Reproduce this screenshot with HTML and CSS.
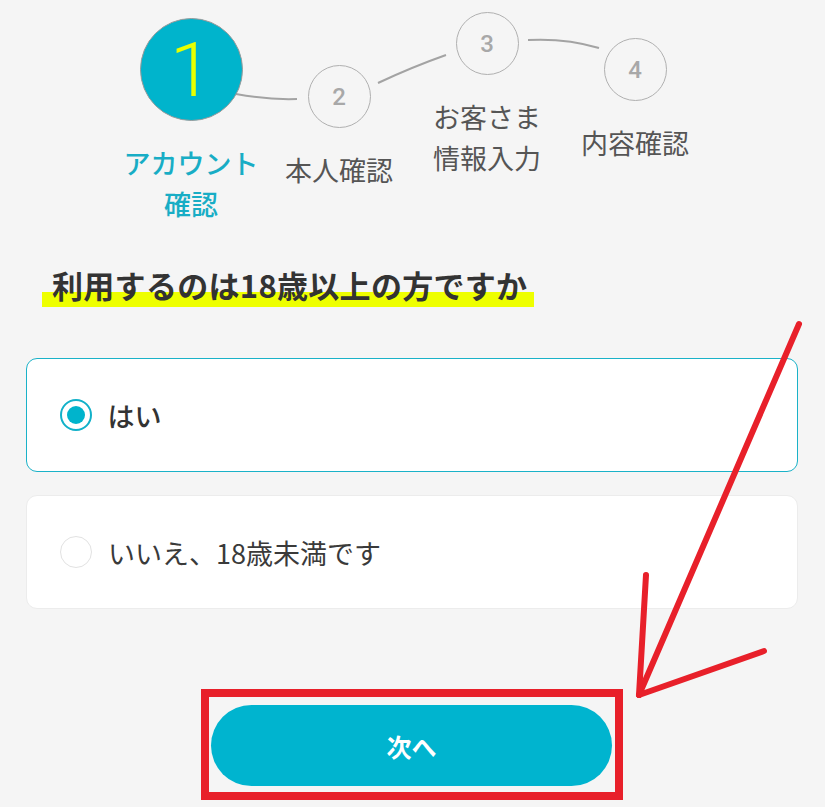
FILE: index.html
```html
<!DOCTYPE html>
<html lang="ja">
<head>
<meta charset="utf-8">
<title>年齢確認</title>
<link rel="stylesheet" href="styles.css">
</head>
<body>
<div class="page">
  <div class="steps">
    <svg class="connectors" viewBox="0 0 825 263" width="825" height="263">
      <path d="M236 94 Q268 100 297 99" />
      <path d="M378 83 Q412 67 446 55" />
      <path d="M528 40 Q566 38 599 48" />
    </svg>
    <div class="step step-1">
      <div class="circle circle-active"><span class="num-big">1</span></div>
      <div class="label label-active">アカウント<br>確認</div>
    </div>
    <div class="step step-2">
      <div class="circle">2</div>
      <div class="label">本人確認</div>
    </div>
    <div class="step step-3">
      <div class="circle">3</div>
      <div class="label">お客さま<br>情報入力</div>
    </div>
    <div class="step step-4">
      <div class="circle">4</div>
      <div class="label">内容確認</div>
    </div>
  </div>

  <h1 class="question"><span class="marker">利用するのは18歳以上の方ですか</span></h1>

  <div class="options">
    <label class="option option-selected">
      <span class="radio radio-on"></span>
      <span class="option-text">はい</span>
    </label>
    <label class="option">
      <span class="radio"></span>
      <span class="option-text">いいえ、18歳未満です</span>
    </label>
  </div>

  <div class="actions">
    <button class="next-btn">次へ</button>
  </div>

  <div class="red-box"></div>
  <svg class="arrow" viewBox="0 0 825 807" width="825" height="807">
    <line x1="799" y1="324" x2="639" y2="695" />
    <line x1="646" y1="575" x2="639" y2="695" />
    <line x1="764" y1="651" x2="639" y2="695" />
  </svg>
</div>
</body>
</html>
```

FILE: styles.css
```css
* {
  box-sizing: border-box;
}

html, body {
  margin: 0;
  padding: 0;
  background: #f5f5f5;
}

body {
  font-family: "Noto Sans CJK JP", "Noto Sans", sans-serif;
  color: #333;
}

.page {
  position: relative;
  width: 825px;
  height: 807px;
  overflow: hidden;
}

/* ---------- steps ---------- */
.steps {
  position: relative;
  height: 263px;
  display: flex;
  justify-content: center;
  align-items: flex-start;
  padding-left: 1px;
}

.connectors {
  position: absolute;
  left: 0;
  top: 0;
}

.connectors path {
  fill: none;
  stroke: #a3a3a3;
  stroke-width: 2;
}

.step {
  width: 148px;
  display: flex;
  flex-direction: column;
  align-items: center;
  position: relative;
}

.step-1 { margin-top: 18px; }
.step-2 { margin-top: 65px; }
.step-3 { margin-top: 12px; }
.step-4 { margin-top: 38px; }

.circle {
  width: 63px;
  height: 63px;
  border-radius: 50%;
  border: 1.5px solid #b0b0b0;
  display: flex;
  align-items: center;
  justify-content: center;
  font-family: Roboto, "Liberation Sans", sans-serif;
  font-weight: 500;
  font-size: 24px;
  color: #a8a8a8;
}

.circle-active {
  width: 103px;
  height: 103px;
  background: #00b4cc;
  border: 1px solid #9a9a9a;
}

.num-big {
  font-family: Roboto, "Liberation Sans", sans-serif;
  font-weight: 300;
  font-size: 76px;
  line-height: 1;
  color: #e8ff00;
}

.label {
  margin-top: 21px;
  font-size: 27px;
  line-height: 41px;
  text-align: center;
  color: #555;
  white-space: nowrap;
}

.label-active {
  color: #18adc5;
  font-weight: 500;
}

/* ---------- question ---------- */
.question {
  margin: 0;
  padding-left: 42px;
  font-size: 31px;
  font-weight: 700;
  line-height: 44px;
  color: #333;
}

.marker {
  display: inline-block;
  padding: 0 7px 0 10px;
  letter-spacing: 0.3px;
  background: linear-gradient(to bottom, transparent 66%, #eeff00 66%, #eeff00 100%);
}

/* ---------- options ---------- */
.options {
  margin-top: 51px;
  padding: 0 27px 0 26px;
  display: flex;
  flex-direction: column;
  gap: 23px;
}

.option {
  display: flex;
  align-items: center;
  height: 114px;
  padding-left: 33px;
  background: #fff;
  border: 1px solid #ececec;
  border-radius: 11px;
}

.option-selected {
  border: 1.5px solid #1ab2c8;
  padding-left: 32.5px;
}

.radio {
  width: 32px;
  height: 32px;
  border-radius: 50%;
  border: 1.5px solid #e2e2e2;
  background: #fff;
  display: flex;
  align-items: center;
  justify-content: center;
  flex-shrink: 0;
}

.radio-on {
  border: 2px solid #12b1c9;
}

.radio-on::after {
  content: "";
  width: 18px;
  height: 18px;
  border-radius: 50%;
  background: #00b4cc;
}

.option-text {
  margin-left: 16px;
  font-size: 27px;
  font-weight: 400;
  color: #3a3a3a;
}

.option-selected .option-text {
  font-weight: 500;
  color: #333;
}

/* ---------- action ---------- */
.actions {
  margin-top: 96px;
  display: flex;
  justify-content: center;
  padding-right: 2px;
}

.next-btn {
  width: 401px;
  height: 81px;
  border: none;
  border-radius: 41px;
  background: #00b4cf;
  color: #fff;
  font-family: "Noto Sans CJK JP", sans-serif;
  font-size: 25px;
  font-weight: 700;
}

/* ---------- annotations ---------- */
.red-box {
  position: absolute;
  left: 201px;
  top: 689px;
  width: 422px;
  height: 111px;
  border: 8px solid #e8202a;
}

.arrow {
  position: absolute;
  left: 0;
  top: 0;
  pointer-events: none;
}

.arrow line {
  stroke: #e8202a;
  stroke-width: 6;
  stroke-linecap: round;
}
```
